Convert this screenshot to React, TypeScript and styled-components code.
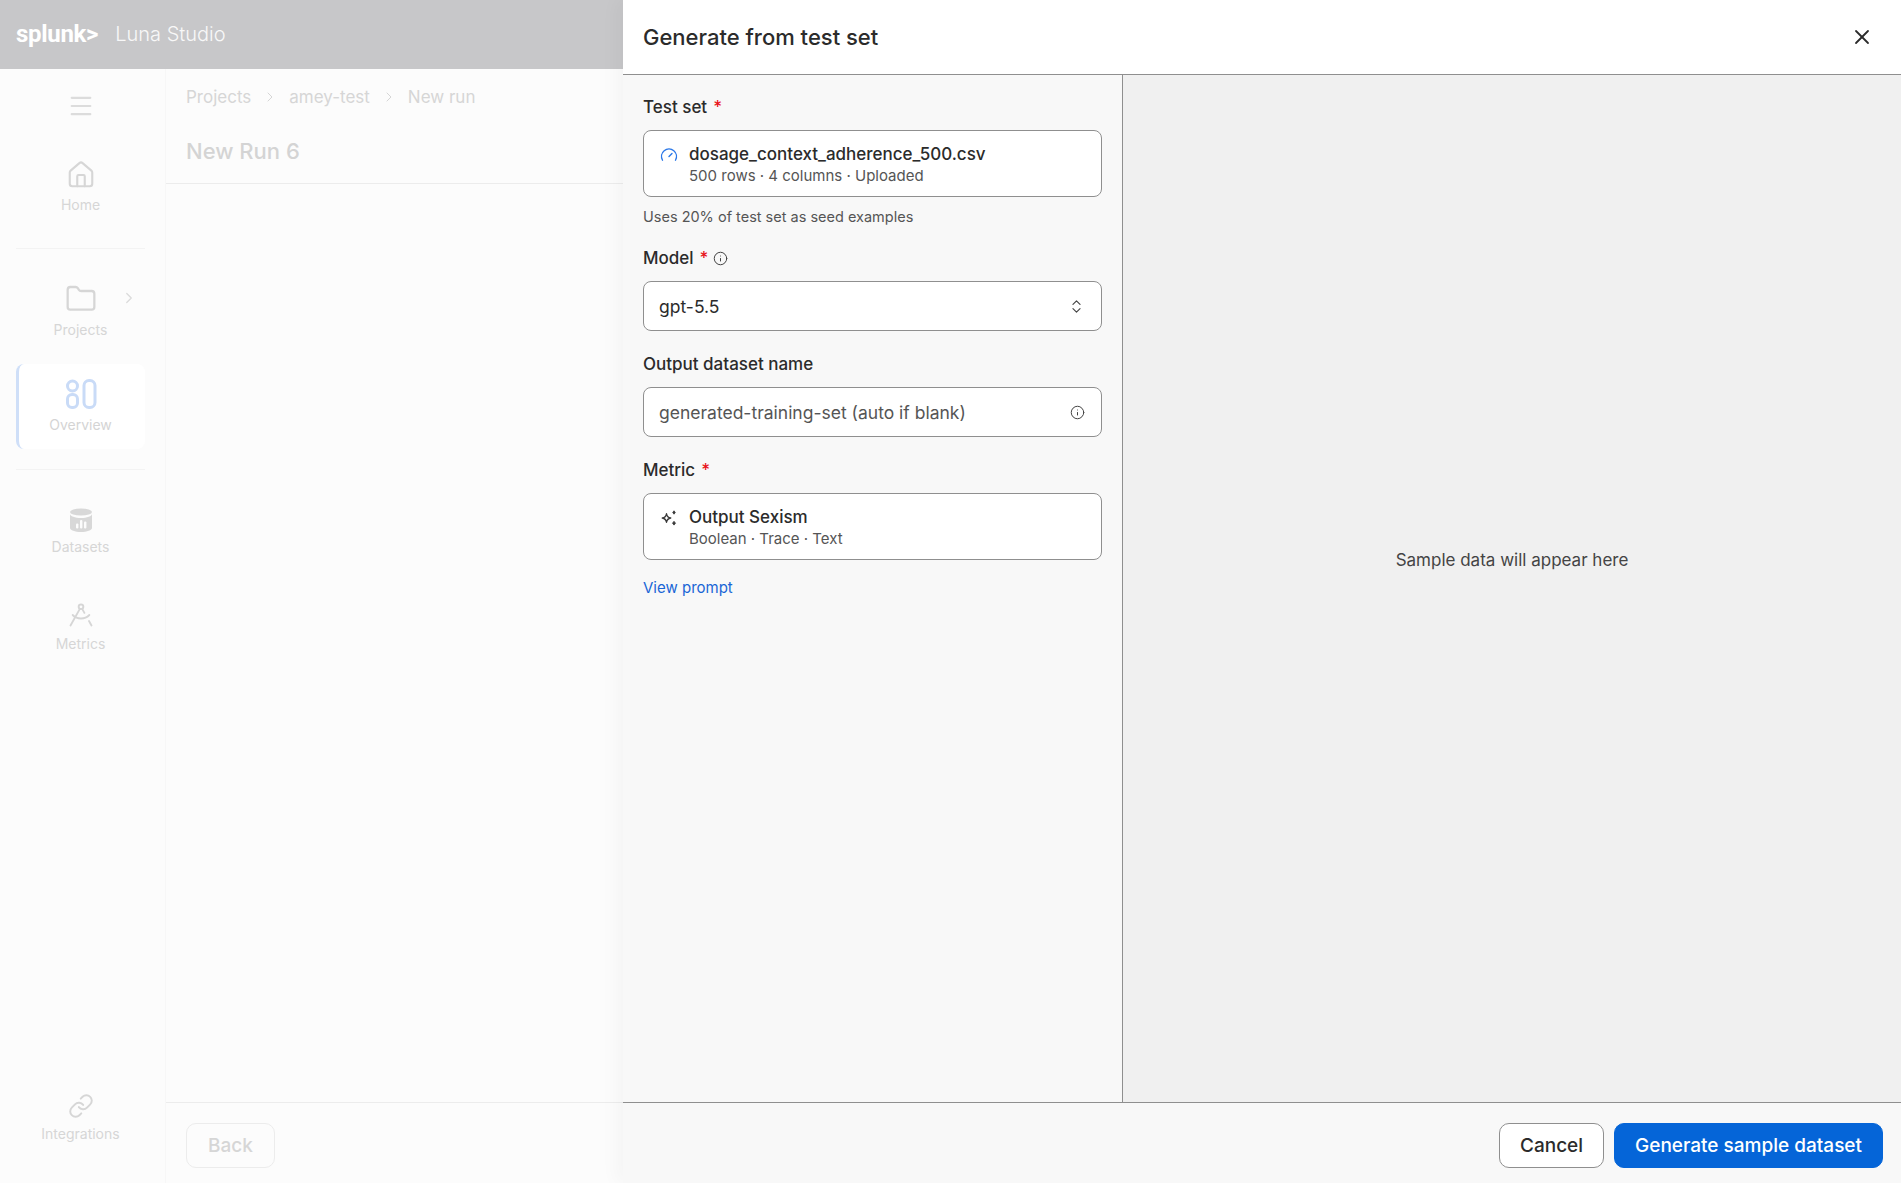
import React from "react";
import styled, { createGlobalStyle } from "styled-components";
import { ChevronRight, ChevronsUpDown, DraftingCompass, Folder, Gauge, House, Info, Link, Menu, X } from "lucide-react";

const Global = createGlobalStyle`
  html, body { margin: 0; padding: 0; height: 100%; background: #fcfcfc; }
  #root { height: 100%; }
  * { box-sizing: border-box; }
  body { font-family: Inter, "Liberation Sans", sans-serif; }
`;

const Page = styled.div`
  position: relative;
  width: 1901px;
  height: 1183px;
  overflow: hidden;
  display: flex;
  flex-direction: column;
`;

const TopBar = styled.header`
  height: 69px;
  flex: none;
  background: #c7c7c9;
  display: flex;
  align-items: center;
  padding-left: 16px;
  gap: 17px;
  color: #fff;
`;

const Logo = styled.span`
  font-family: Roboto, "Liberation Sans", sans-serif;
  font-size: 24px;
  font-weight: 700;
  letter-spacing: -0.3px;
  padding-bottom: 2px;
`;

const Product = styled.span`
  font-size: 20px;
  font-weight: 300;
  color: #f8f8f8;
  padding-bottom: 2px;
`;

const Body = styled.div`
  flex: 1;
  display: flex;
  min-height: 0;
`;

const Sidebar = styled.nav`
  width: 166px;
  flex: none;
  background: #fcfcfc;
  border-right: 1px solid #f7f7f7;
  display: flex;
  flex-direction: column;
  padding: 0 20px 0 16px;
`;

const Burger = styled.div`
  height: 74px;
  flex: none;
  display: flex;
  align-items: center;
  justify-content: center;
  color: #dcdcdc;
`;

const NavItem = styled.div<{ $h: number; $top: number }>`
  position: relative;
  flex: none;
  height: ${(p) => p.$h}px;
  padding-top: ${(p) => p.$top}px;
  display: flex;
  flex-direction: column;
  align-items: center;
  color: #d6d6d6;
  font-size: 14px;
  line-height: 18px;
  gap: 6px;
`;

const Bottom = styled(NavItem)`
  margin-top: auto;
`;

const ActiveItem = styled(NavItem)`
  background: #fff;
  border-left: 3px solid #cfdff8;
  border-radius: 8px;
  padding-right: 3px;
  color: #d4d4d4;
`;

const Caret = styled.span`
  position: absolute;
  right: 7px;
  top: 12px;
  color: #dcdcdc;
  display: flex;
`;

const NavRule = styled.div<{ $mt: number; $mb: number }>`
  flex: none;
  height: 1px;
  background: #f3f3f3;
  margin: ${(p) => p.$mt}px 0 ${(p) => p.$mb}px;
`;

const Main = styled.main`
  flex: 1;
  min-width: 0;
  display: flex;
  flex-direction: column;
  background: #fcfcfc;
`;

const Crumbs = styled.div`
  height: 56px;
  flex: none;
  padding-left: 20px;
  display: flex;
  align-items: center;
  gap: 11px;
  color: #d6d6d6;
  font-size: 17px;
`;

const RunTitle = styled.div`
  height: 59px;
  flex: none;
  padding: 0 0 7px 20px;
  display: flex;
  align-items: center;
  border-bottom: 1px solid #ececec;
  color: #d4d4d4;
  font-size: 22px;
  font-weight: 500;
`;

const MainFill = styled.div`
  flex: 1;
`;

const MainFooter = styled.div`
  height: 81px;
  flex: none;
  border-top: 1px solid #ececec;
  padding: 20px 0 0 20px;
`;

const BackButton = styled.div`
  width: 89px;
  height: 45px;
  border: 1px solid #ececec;
  border-radius: 10px;
  display: flex;
  align-items: center;
  justify-content: center;
  color: #d6d6d6;
  font-size: 19px;
  font-weight: 500;
`;

const Drawer = styled.aside`
  position: absolute;
  top: 0;
  right: 0;
  bottom: 0;
  width: 1278px;
  background: #fff;
  box-shadow: -6px 0 18px rgba(0, 0, 0, 0.035);
  display: flex;
  flex-direction: column;
`;

const DrawerHead = styled.div`
  height: 75px;
  flex: none;
  border-bottom: 1px solid #8f8f8f;
  padding: 0 27px 0 20px;
  display: flex;
  align-items: center;
  justify-content: space-between;
`;

const DrawerTitle = styled.h2`
  margin: 0;
  font-size: 22px;
  font-weight: 500;
  color: #2b2b2b;
`;

const Close = styled.span`
  display: flex;
  color: #2b2b2b;
`;

const Split = styled.div`
  flex: 1;
  min-height: 0;
  display: flex;
`;

const FormPane = styled.div`
  width: 500px;
  flex: none;
  background: #f8f8f8;
  border-right: 1px solid #8f8f8f;
  padding: 20px 20px 0 20px;
  display: flex;
  flex-direction: column;
`;

const PreviewPane = styled.div`
  flex: 1;
  background: #f0f0f0;
  display: flex;
  align-items: center;
  justify-content: center;
  padding-bottom: 57px;
  color: #444;
  font-size: 17px;
`;

const Label = styled.div<{ $mt?: number }>`
  display: flex;
  align-items: center;
  gap: 5px;
  height: 24px;
  margin-top: ${(p) => p.$mt ?? 0}px;
  margin-bottom: 11px;
  color: #2b2b2b;
  font-size: 17px;
  font-weight: 500;
`;

const Star = styled.span`
  color: #e8141c;
  margin-left: 1px;
`;

const CardField = styled.div`
  height: 67px;
  flex: none;
  background: #fff;
  border: 1px solid #8f8f8f;
  border-radius: 8px;
  padding: 12px 16px;
  display: flex;
  gap: 11px;
`;

const CardIcon = styled.span<{ $color: string }>`
  width: 18px;
  flex: none;
  padding-top: 3px;
  color: ${(p) => p.$color};
`;

const CardText = styled.div`
  display: flex;
  flex-direction: column;
`;

const CardName = styled.span`
  font-size: 17px;
  line-height: 22px;
  font-weight: 500;
  color: #2b2b2b;
`;

const CardMeta = styled.span`
  font-size: 15px;
  line-height: 21px;
  color: #555;
`;

const Hint = styled.div`
  margin-top: 10px;
  font-size: 14.5px;
  line-height: 20px;
  color: #555;
`;

const InputField = styled.div`
  height: 50px;
  flex: none;
  background: #fff;
  border: 1px solid #8f8f8f;
  border-radius: 8px;
  padding: 0 16px 0 15px;
  display: flex;
  align-items: center;
  justify-content: space-between;
  font-size: 17.5px;
  color: #2b2b2b;
`;

const Placeholder = styled.span`
  color: #555;
`;

const FieldIcon = styled.span`
  display: flex;
  color: #444;
`;

const Prompt = styled.a`
  margin-top: 18px;
  color: #1a66d6;
  font-size: 15px;
  line-height: 20px;
`;

const DrawerFooter = styled.div`
  height: 81px;
  flex: none;
  background: #f8f8f8;
  border-top: 1px solid #8f8f8f;
  padding: 20px 18px 0 0;
  display: flex;
  justify-content: flex-end;
  gap: 10px;
`;

const Button = styled.button<{ $primary?: boolean }>`
  height: 45px;
  padding: 0 ${(p) => (p.$primary ? 20 : 20)}px;
  border-radius: 10px;
  border: 1px solid ${(p) => (p.$primary ? "#0565d8" : "#8f8f8f")};
  background: ${(p) => (p.$primary ? "#0565d8" : "#fff")};
  color: ${(p) => (p.$primary ? "#fff" : "#2b2b2b")};
  font-family: inherit;
  font-size: 19px;
  font-weight: 500;
`;

const OverviewIcon = () => (
  <svg width="32" height="32" viewBox="0 0 32 32" fill="none" stroke="#c9dbf7" strokeWidth="3">
    <circle cx="7.5" cy="8" r="5" />
    <rect x="2.5" y="16.5" width="10" height="13" rx="4.5" />
    <rect x="19" y="2.5" width="11" height="27" rx="5" />
  </svg>
);

const DatasetIcon = () => (
  <svg width="24" height="24" viewBox="0 0 24 24">
    <path fill="#d8d8d8" d="M1 6v14c0 2 5 4 11 4s11-2 11-4V6c0 2-5 4-11 4S1 8 1 6z" />
    <ellipse fill="#d8d8d8" cx="12" cy="4" rx="11" ry="3.6" />
    <g fill="#fcfcfc">
      <rect x="7" y="15.5" width="2.4" height="5" rx="1" />
      <rect x="11" y="12" width="2.4" height="8.5" rx="1" />
      <rect x="15" y="13.5" width="2.4" height="7" rx="1" />
    </g>
  </svg>
);

const SparkIcon = () => (
  <svg width="18" height="18" viewBox="0 0 18 18" fill="none" stroke="currentColor" strokeWidth="1.4" strokeLinejoin="round">
    <path d="M6.5 4.8c.5 2.8 1.4 3.7 4.2 4.2-2.8.5-3.7 1.4-4.2 4.2C6 10.400 5.100 9.500 2.300 9c2.800-.5 3.700-1.400 4.200-4.200z" />
    <path fill="currentColor" strokeWidth="0.8" d="M14 1.800l1.300 1.700L14 5.200l-1.300-1.700zM14 12.300l1.500 1.900L14 16.100l-1.500-1.900z" />
  </svg>
);

export default function App() {
  return (
    <Page>
      <Global />
      <TopBar>
        <Logo>splunk&gt;</Logo>
        <Product>Luna Studio</Product>
      </TopBar>
      <Body>
        <Sidebar>
          <Burger><Menu size={28} strokeWidth={1.8} /></Burger>
          <NavItem $h={105} $top={17}>
            <House size={30} strokeWidth={1.7} />
            Home
          </NavItem>
          <NavRule $mt={0} $mb={0} />
          <NavItem $h={115} $top={34}>
            <Folder size={32} strokeWidth={1.7} />
            <Caret style={{ top: 40 }}><ChevronRight size={18} strokeWidth={1.8} /></Caret>
            Projects
          </NavItem>
          <ActiveItem $h={85} $top={14}>
            <OverviewIcon />
            Overview
          </ActiveItem>
          <NavRule $mt={20} $mb={0} />
          <NavItem $h={96} $top={38}>
            <DatasetIcon />
            Datasets
          </NavItem>
          <NavItem $h={96} $top={35}>
            <DraftingCompass size={28} strokeWidth={1.6} />
            Metrics
          </NavItem>
          <Bottom $h={90} $top={0}>
            <Link size={26} strokeWidth={1.8} />
            Integrations
          </Bottom>
        </Sidebar>
        <Main>
          <Crumbs>
            Projects <ChevronRight size={16} strokeWidth={1.5} /> amey-test <ChevronRight size={16} strokeWidth={1.5} /> New run
          </Crumbs>
          <RunTitle>New Run 6</RunTitle>
          <MainFill />
          <MainFooter><BackButton>Back</BackButton></MainFooter>
        </Main>
      </Body>
      <Drawer>
        <DrawerHead>
          <DrawerTitle>Generate from test set</DrawerTitle>
          <Close><X size={24} strokeWidth={1.8} /></Close>
        </DrawerHead>
        <Split>
          <FormPane>
            <Label>Test set <Star>*</Star></Label>
            <CardField>
              <CardIcon $color="#2b78e8"><Gauge size={18} strokeWidth={1.8} /></CardIcon>
              <CardText>
                <CardName>dosage_context_adherence_500.csv</CardName>
                <CardMeta>500 rows · 4 columns · Uploaded</CardMeta>
              </CardText>
            </CardField>
            <Hint>Uses 20% of test set as seed examples</Hint>
            <Label $mt={19}>Model <Star>*</Star> <FieldIcon><Info size={15} strokeWidth={1.6} /></FieldIcon></Label>
            <InputField>
              gpt-5.5
              <FieldIcon><ChevronsUpDown size={17} strokeWidth={1.6} /></FieldIcon>
            </InputField>
            <Label $mt={21}>Output dataset name</Label>
            <InputField>
              <Placeholder>generated-training-set (auto if blank)</Placeholder>
              <FieldIcon><Info size={15} strokeWidth={1.6} /></FieldIcon>
            </InputField>
            <Label $mt={21}>Metric <Star>*</Star></Label>
            <CardField>
              <CardIcon $color="#3a3a3a"><SparkIcon /></CardIcon>
              <CardText>
                <CardName>Output Sexism</CardName>
                <CardMeta>Boolean · Trace · Text</CardMeta>
              </CardText>
            </CardField>
            <Prompt>View prompt</Prompt>
          </FormPane>
          <PreviewPane>Sample data will appear here</PreviewPane>
        </Split>
        <DrawerFooter>
          <Button>Cancel</Button>
          <Button $primary>Generate sample dataset</Button>
        </DrawerFooter>
      </Drawer>
    </Page>
  );
}
